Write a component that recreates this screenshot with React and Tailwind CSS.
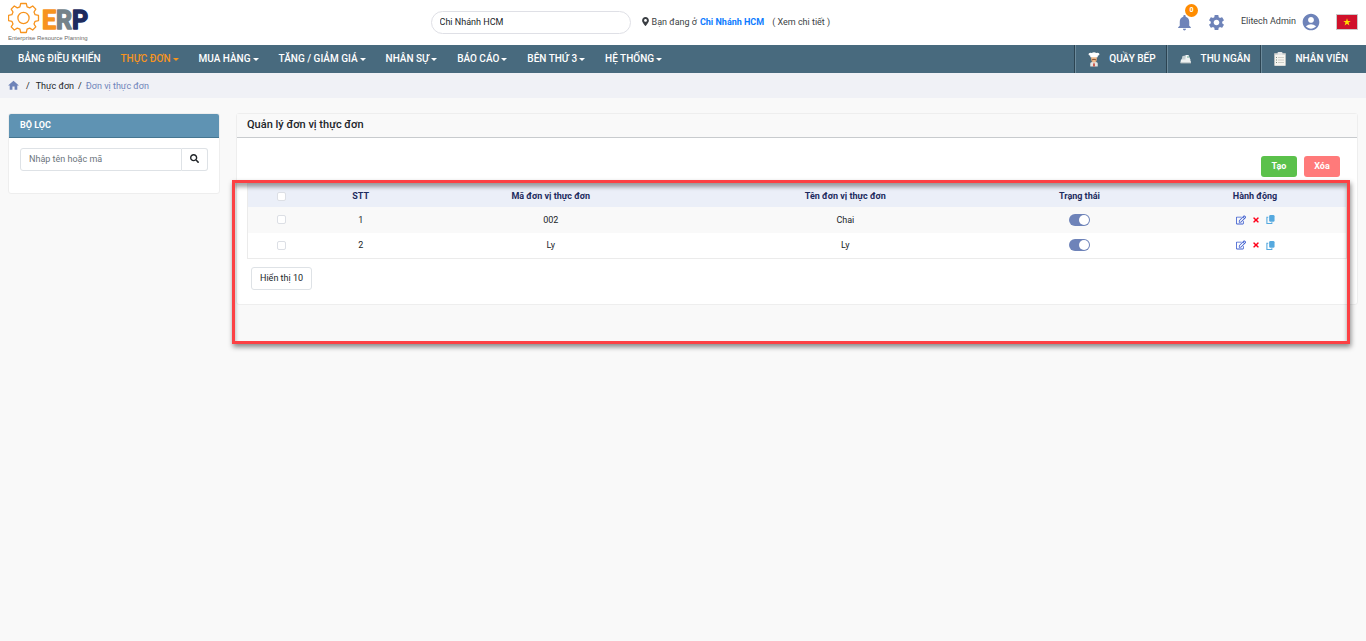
import { useState } from 'react';
import { FaMapMarkerAlt, FaRegEdit, FaSearch, FaTimes } from 'react-icons/fa';
import { MdAccountCircle, MdHome, MdNotifications, MdSettings } from 'react-icons/md';

const MENU = [
    { label: 'BẢNG ĐIỀU KHIỂN' },
    { label: 'THỰC ĐƠN', dropdown: true, active: true },
    { label: 'MUA HÀNG', dropdown: true },
    { label: 'TĂNG / GIẢM GIÁ', dropdown: true },
    { label: 'NHÂN SỰ', dropdown: true },
    { label: 'BÁO CÁO', dropdown: true },
    { label: 'BÊN THỨ 3', dropdown: true },
    { label: 'HỆ THỐNG', dropdown: true },
];

const UNITS = [
    { id: 1, code: '002', name: 'Chai' },
    { id: 2, code: 'Ly', name: 'Ly' },
];

const Logo = () => (
    <svg viewBox="0 0 84 42" className="w-[84px] h-[42px]" role="img" aria-label="ERP">
        <g transform="translate(15.5 16)" fill="none" stroke="#f7941e" strokeWidth="1.3" strokeLinejoin="round">
            <path d="M-2.8 -14.5H2.8L3.6 -11.2L6.2 -10.1L9.2 -12L12.3 -8.9L10.5 -6L11.6 -3.3L15 -2.6V2.6L11.6 3.3L10.5 6L12.3 8.9L9.2 12L6.2 10.1L3.6 11.2L2.8 14.5H-2.8L-3.6 11.2L-6.2 10.1L-9.2 12L-12.3 8.9L-10.5 6L-11.6 3.3L-15 2.6V-2.6L-11.6 -3.3L-10.5 -6L-12.3 -8.9L-9.2 -12L-6.2 -10.1L-3.6 -11.2Z" />
            <circle r="5.6" />
        </g>
        <text
            x="34"
            y="27"
            fontFamily="Roboto, sans-serif"
            fontWeight="700"
            fontSize="25"
            strokeWidth="1.4"
            strokeLinejoin="round"
        >
            <tspan fill="#f7941e" stroke="#f7941e">E</tspan>
            <tspan fill="#75838a" stroke="#75838a">R</tspan>
            <tspan fill="#1d2b5e" stroke="#1d2b5e">P</tspan>
        </text>
        <text x="0" y="38" fontSize="6" fontFamily="'Liberation Sans', sans-serif" fill="#6b6b6b">
            Enterprise Resource Planning
        </text>
    </svg>
);

const ChefIcon = () => (
    <svg viewBox="0 0 14 16" className="w-3.5 h-[15px]">
        <path d="M3 15.500V12.500Q3 10.500 7 10.500T11 12.500V15.500Z" fill="#e8e4e0" />
        <path d="M6 11L7 13L8 11V15.500H6Z" fill="#c9574a" />
        <path d="M4 5H10V8Q10 11 7 11T4 8Z" fill="#f0b98a" />
        <path d="M4.500 8.500Q7 7 9.500 8.500" stroke="#7a4a2e" fill="none" />
        <path d="M3 5.500V4Q0.500 3.500 1.500 1.700Q2.500 0.300 4.500 1Q7 -0.500 9.500 1Q11.500 0.300 12.500 1.700Q13.500 3.500 11 4V5.500Z" fill="#fff" />
    </svg>
);

const RegisterIcon = () => (
    <svg viewBox="0 0 14 16" className="w-3.5 h-4">
        <path d="M3.500 5L6.500 4.500L7.500 9H2.500Z" fill="#c9d2d4" />
        <path d="M6.500 4H9.500L11.500 9H6.500Z" fill="#f2f5f5" />
        <path d="M2 8.500H11L12 11V12H1.500V11Z" fill="#eef1f1" />
        <path d="M8 6H10" stroke="#62a58d" />
        <path d="M1.500 12H12" stroke="#a3adb0" />
    </svg>
);

const ClipboardIcon = () => (
    <svg viewBox="0 0 14 16" className="w-3.5 h-4">
        <rect x="1" y="2" width="12" height="13" rx="1" fill="#b9bebf" />
        <rect x="2" y="3.500" width="10" height="11" fill="#f5f4ef" />
        <rect x="4.500" y="1" width="5" height="3" rx="1" fill="#e4e6e6" />
        <path d="M5 6.500H11M5 9H11M5 11.500H11" stroke="#c4c4bd" strokeWidth="0.800" />
        <path d="M3 6.500H4M3 9H4M3 11.500H4" stroke="#7a8c7e" />
    </svg>
);

const CopyIcon = () => (
    <svg viewBox="0 0 10 10" className="size-[9px]">
        <rect x="3.500" y="0" width="6" height="7.500" rx="1.500" fill="#55a9df" />
        <path d="M2.500 2.500H1V9.400H6.500V8" fill="none" stroke="#55a9df" strokeWidth="1.200" />
    </svg>
);

const CaretIcon = () => (
    <svg viewBox="0 0 6 3" className="w-1.5 h-[3px] ml-0.5" fill="currentColor">
        <path d="M0 0H6L3 3Z" />
    </svg>
);

const FlagIcon = () => (
    <svg viewBox="0 0 22 16" className="w-[22px] h-4">
        <rect x="0.500" y="0.500" width="21" height="15" fill="#d0112b" stroke="#c9c9c9" />
        <path d="M11 4.200L11.900 6.900H14.800L12.500 8.600L13.400 11.400L11 9.700L8.600 11.400L9.500 8.600L7.200 6.900H10.100Z" fill="#ffde00" />
    </svg>
);

const SHORTCUTS = [
    { label: 'QUẦY BẾP', Icon: ChefIcon },
    { label: 'THU NGÂN', Icon: RegisterIcon },
    { label: 'NHÂN VIÊN', Icon: ClipboardIcon },
];

const Header = () => (
    <header className="flex items-center h-[45px] px-2 bg-white">
        <a href="#" className="w-[423px] max-w-[31.3%]">
            <Logo />
        </a>
        <select
            aria-label="Chi nhánh"
            className="appearance-none w-50 h-[23px] px-2 pb-0.5 border border-[#dfe0e6] rounded-full bg-white text-[#212529]"
        >
            <option>Chi Nhánh HCM</option>
        </select>
        <div className="flex items-center ml-[10px] pb-0.5 text-[#3b3f44]">
            <FaMapMarkerAlt size={9} />
            <span className="ml-0.5">Bạn đang ở</span>
            <span className="ml-[3px] font-bold text-[#0d7bff]">Chi Nhánh HCM</span>
            <a href="#" className="ml-2">( Xem chi tiết )</a>
        </div>
        <div className="flex items-center ml-auto pb-px text-[#6e83b9]">
            <button aria-label="Thông báo" className="relative mr-[13px]">
                <MdNotifications size={19} />
                <span className="absolute -top-[9px] -right-1 flex items-center justify-center size-[13px] rounded-full bg-[#ff8c00] text-white text-[7px] font-bold">
                    0
                </span>
            </button>
            <button aria-label="Cài đặt">
                <MdSettings size={19} />
            </button>
            <a href="#" className="flex items-center ml-[15px]">
                <span className="pb-0.5 mr-[5px] text-[#3b3f44]">Elitech Admin</span>
                <MdAccountCircle size={20} />
            </a>
            <button aria-label="Tiếng Việt" className="ml-[15px]">
                <FlagIcon />
            </button>
        </div>
    </header>
);

const NavBar = () => (
    <nav className="flex h-7 bg-[#486a7e] text-white text-[10px] font-medium">
        <ul className="flex items-center pl-2">
            {MENU.map((item) => (
                <li key={item.label}>
                    <a href="#" className={`flex items-center px-[10px] ${item.active ? 'text-[#f7941e]' : ''}`}>
                        {item.label}
                        {item.dropdown && <CaretIcon />}
                    </a>
                </li>
            ))}
        </ul>
        <div className="flex ml-auto pr-2">
            {SHORTCUTS.map(({ label, Icon }) => (
                <a key={label} href="#" className="flex items-center border-l border-[#2c4452]">
                    <span className="flex items-center h-full gap-2 pl-[11px] pr-[10px] border-l border-[#6d8b9c]">
                        <Icon />
                        {label}
                    </span>
                </a>
            ))}
        </div>
    </nav>
);

const Breadcrumb = () => (
    <div className="flex items-center h-[25px] pl-[7px] bg-[#f0f1f6] text-[#212529]">
        <a href="#" aria-label="Trang chủ" className="text-[#6e83b9]">
            <MdHome size={13} />
        </a>
        <span className="mx-1.5">/</span>
        <a href="#">Thực đơn</a>
        <span className="mx-1">/</span>
        <span className="text-[#6e83b9]">Đơn vị thực đơn</span>
    </div>
);

const FilterPanel = () => (
    <aside className="w-[212px] shrink-0 rounded-[3px] border border-[#eeeeee] bg-white overflow-hidden">
        <h2 className="h-6 px-[11px] leading-[22px] font-bold text-white bg-[#5f93b3] border-b border-[#457691]">BỘ LỌC</h2>
        <form className="flex mt-[10px] mx-[11px] mb-[22px]" onSubmit={(e) => e.preventDefault()}>
            <input
                type="text"
                aria-label="Nhập tên hoặc mã"
                placeholder="Nhập tên hoặc mã"
                className="min-w-0 flex-1 h-[23px] px-2 pb-0.5 border border-[#dee2e6] rounded-l-[3px] text-[#212529] placeholder:text-[#6c757d]"
            />
            <button
                aria-label="Tìm kiếm"
                className="flex items-center justify-center w-[26px] pb-0.5 border border-l-0 border-[#dee2e6] rounded-r-[3px] text-[#212529]"
            >
                <FaSearch size={9} />
            </button>
        </form>
    </aside>
);

const checkboxClass = 'block mx-auto size-[9px] appearance-none border border-[#dcdfe5] rounded-[2px] bg-white checked:bg-[#6e83b9]';

const UnitRow = ({ unit }) => {
    const [enabled, setEnabled] = useState(true);

    return (
        <tr className="h-[26px] odd:bg-[#f9f9f9]">
            <td>
                <input type="checkbox" aria-label={`Chọn ${unit.name}`} className={checkboxClass} />
            </td>
            <td>{unit.id}</td>
            <td>{unit.code}</td>
            <td>{unit.name}</td>
            <td>
                <input
                    type="checkbox"
                    role="switch"
                    aria-label={`Trạng thái ${unit.name}`}
                    checked={enabled}
                    onChange={(e) => setEnabled(e.target.checked)}
                    className="flex items-center mx-auto w-[21px] h-3 px-px appearance-none rounded-full bg-gray-300 checked:bg-[#6e83b9] checked:justify-end before:size-[10px] before:rounded-full before:bg-white"
                />
            </td>
            <td>
                <div className="flex items-center justify-center gap-[6px]">
                    <button aria-label="Sửa" className="text-[#3f5fd0]"><FaRegEdit size={10} /></button>
                    <button aria-label="Xóa" className="text-[#ff0019]"><FaTimes size={8} /></button>
                    <button aria-label="Sao chép"><CopyIcon /></button>
                </div>
            </td>
        </tr>
    );
};

const UnitPanel = () => (
    <section className="relative flex-1 min-w-0 border border-[#eeeeee] rounded-[3px] bg-white">
        <h1 className="h-6 px-[10px] leading-[22px] text-[11px] font-medium text-[#212529] bg-[#f9f9f9] border-b border-[#c8cbce]">
            Quản lý đơn vị thực đơn
        </h1>
        <div className="flex justify-end gap-[7px] pt-[18px] pr-[17px]">
            <button className="w-9 h-[21px] pb-0.5 rounded-[3px] bg-[#5bc14b] text-white font-bold">Tạo</button>
            <button className="w-9 h-[21px] pb-0.5 rounded-[3px] bg-[#ff7a7a] text-white font-bold">Xóa</button>
        </div>
        <div className="px-[10px] pt-[6px] pb-[14px]">
            <table className="w-full table-fixed border-collapse text-center text-[#212529] border border-[#ebebeb]">
                <colgroup>
                    <col className="w-[6.2%]" />
                    <col className="w-[8.2%]" />
                    <col className="w-[26.4%]" />
                    <col className="w-[27.2%]" />
                    <col className="w-[15.4%]" />
                    <col className="w-[16.6%]" />
                </colgroup>
                <thead>
                    <tr className="h-[23px] bg-[#ebeff8] text-[#1d2b5e] *:pt-0.5">
                        <th>
                            <input type="checkbox" aria-label="Chọn tất cả" className={checkboxClass} />
                        </th>
                        <th>STT</th>
                        <th>Mã đơn vị thực đơn</th>
                        <th>Tên đơn vị thực đơn</th>
                        <th>Trạng thái</th>
                        <th>Hành động</th>
                    </tr>
                </thead>
                <tbody>
                    {UNITS.map((unit) => (
                        <UnitRow key={unit.id} unit={unit} />
                    ))}
                </tbody>
            </table>
            <button className="mt-2 ml-1 h-[23px] px-2 pb-0.5 border border-[#dee2e6] rounded-[3px] bg-white text-[#212529]">
                Hiển thị 10
            </button>
        </div>
        {/* highlight frame around the list */}
        <div className="absolute top-[66px] -left-[5px] right-[7px] h-[164px] border-3 border-[#fc4144] pointer-events-none shadow-[1px_3px_5px_rgba(0,0,0,0.45),inset_0_4px_4px_rgba(0,0,0,0.35)]" />
    </section>
);

const App = () => (
    <div className="min-h-screen bg-[#f9f9f9] font-[Roboto,sans-serif] text-[9px] leading-[14px]">
        <Header />
        <NavBar />
        <Breadcrumb />
        <main className="flex items-start gap-4 pt-[15px] px-2">
            <FilterPanel />
            <UnitPanel />
        </main>
    </div>
);

export default App;
